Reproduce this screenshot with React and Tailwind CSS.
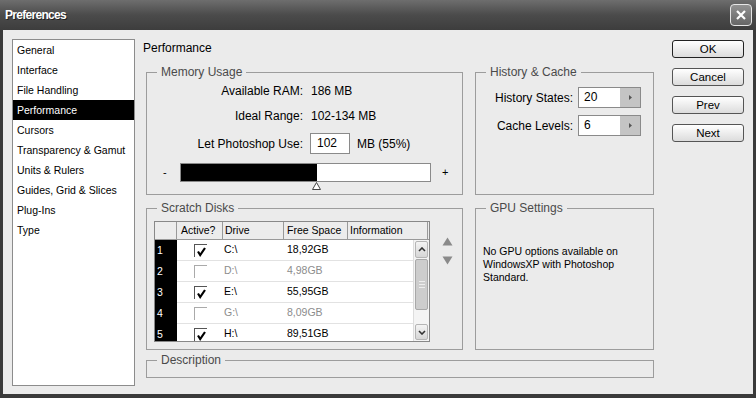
import React from 'react';

const categories = [
  'General',
  'Interface',
  'File Handling',
  'Performance',
  'Cursors',
  'Transparency & Gamut',
  'Units & Rulers',
  'Guides, Grid & Slices',
  'Plug-Ins',
  'Type',
];

const disks = [
  { n: 1, active: true, drive: 'C:\\', free: '18,92GB' },
  { n: 2, active: false, drive: 'D:\\', free: '4,98GB' },
  { n: 3, active: true, drive: 'E:\\', free: '55,95GB' },
  { n: 4, active: false, drive: 'G:\\', free: '8,09GB' },
  { n: 5, active: true, drive: 'H:\\', free: '89,51GB' },
];

const Group = ({ title, className, children }) => (
  <fieldset className={`border border-[#9c9c9c] min-w-0 ${className}`}>
    <legend className="ml-[10px] px-[4px] text-[12px] leading-[16px] text-[#4a4a4a]">{title}</legend>
    {children}
  </fieldset>
);

const Button = ({ label, primary }) => (
  <button
    className={`w-[72px] h-[18px] rounded-[3px] bg-gradient-to-b from-white to-[#dcdcdc] text-[11.5px] leading-[14px] text-black ${
      primary ? 'border-[1.5px] border-[#222]' : 'border border-[#555]'
    }`}
  >
    {label}
  </button>
);

const Spinner = ({ value }) => (
  <div className="flex w-[63px] h-[21px] border border-[#8a8a8a] bg-white">
    <div className="flex-1 pl-[5px] text-[12px] leading-[19px]">{value}</div>
    <div className="w-[20px] bg-[#c4c4c4] flex items-center justify-center">
      <svg width="5" height="7" viewBox="0 0 5 7">
        <path d="M1 1 L4 3.5 L1 6 Z" fill="#555" />
      </svg>
    </div>
  </div>
);

const Check = ({ on }) => (
  <div className={`relative w-[13px] h-[13px] border-l border-t ${on ? 'border-[#555]' : 'border-[#aaa]'}`}>
    {on && (
      <svg className="absolute left-[1px] top-[1px]" width="11" height="11" viewBox="0 0 11 11">
        <path d="M2 5.5 L4.2 9 L9 2" stroke="#000" strokeWidth="2.2" fill="none" />
      </svg>
    )}
  </div>
);

const Scrollbar = () => (
  <div className="w-[16px] flex flex-col bg-[#f4f4f4] border-l border-[#ddd]">
    <div className="h-[17px] mx-[1px] mt-[1px] rounded-[2px] border border-[#b5b5b5] bg-gradient-to-b from-[#f4f4f4] to-[#d6d6d6] flex items-center justify-center">
      <svg width="8" height="5" viewBox="0 0 8 5">
        <path d="M1 4 L4 1 L7 4" stroke="#333" strokeWidth="1.6" fill="none" />
      </svg>
    </div>
    <div className="h-[51px] mx-[1px] mt-[1px] rounded-[2px] border border-[#a8a8a8] bg-[#cdcdcd] flex flex-col items-center justify-center gap-[2px]">
      <div className="w-[6px] h-px bg-[#eee]" />
      <div className="w-[6px] h-px bg-[#eee]" />
      <div className="w-[6px] h-px bg-[#eee]" />
    </div>
    <div className="flex-1" />
    <div className="h-[16px] mx-[1px] mb-[1px] rounded-[2px] border border-[#b5b5b5] bg-gradient-to-b from-[#f4f4f4] to-[#d6d6d6] flex items-center justify-center">
      <svg width="8" height="5" viewBox="0 0 8 5">
        <path d="M1 1 L4 4 L7 1" stroke="#333" strokeWidth="1.6" fill="none" />
      </svg>
    </div>
  </div>
);

const App = () => {
  return (
    <div className="w-[756px] h-[398px] flex flex-col bg-[#3a3a3a] font-['Liberation_Sans',Arial,sans-serif] overflow-hidden">
      {/* title bar */}
      <div className="h-[30px] flex items-center justify-between pl-[5px] pr-[4px] bg-gradient-to-b from-[#6e6e6e] via-[#4b4b4b] to-[#3d3d3d]">
        <span className="text-white font-bold text-[12px] tracking-[-0.7px] font-['Liberation_Sans_Narrow','Liberation_Sans',sans-serif] [text-shadow:1px_1px_0_#222]">
          Preferences
        </span>
        <div className="w-[22px] h-[22px] rounded-[4px] border border-[#e6e6e6] bg-gradient-to-b from-[#929292] to-[#666] flex items-center justify-center">
          <svg width="12" height="12" viewBox="0 0 12 12">
            <path d="M2 2 L10 10 M10 2 L2 10" stroke="#fff" strokeWidth="2.2" />
          </svg>
        </div>
      </div>

      {/* dialog body */}
      <div className="flex-1 mx-[3px] mb-[4px] bg-[#ebebeb] flex pl-[9px] pt-[9px]">
        {/* category list */}
        <div className="w-[123px] h-[347px] border border-[#8c8c8c] bg-white">
          {categories.map((c) => (
            <div
              key={c}
              className={`h-[20px] px-[4px] text-[10.5px] leading-[20px] ${
                c === 'Performance' ? 'bg-black text-white' : 'text-black'
              }`}
            >
              {c}
            </div>
          ))}
        </div>

        {/* main panel */}
        <div className="ml-[8px] w-[511px] flex flex-col">
          <div className="h-[16px] text-[12px] leading-[16px] text-black mt-[1px]">Performance</div>

          <div className="ml-[3px] mt-[8px] grid grid-cols-[317px_179px] gap-x-[12px]">
            <Group title="Memory Usage" className="h-[131px]">
              <div className="flex items-center h-[20px] mt-[1px] text-[12px]">
                <span className="w-[156px] text-right">Available RAM:</span>
                <span className="ml-[8px]">186 MB</span>
              </div>
              <div className="flex items-center h-[20px] mt-[5px] text-[12px]">
                <span className="w-[156px] text-right">Ideal Range:</span>
                <span className="ml-[8px]">102-134 MB</span>
              </div>
              <div className="flex items-center h-[21px] mt-[7px] text-[12px]">
                <span className="w-[156px] text-right">Let Photoshop Use:</span>
                <div className="ml-[7px] w-[40px] h-[21px] border border-[#8a8a8a] bg-white pl-[6px] leading-[19px]">102</div>
                <span className="ml-[7px]">MB (55%)</span>
              </div>
              <div className="flex items-center mt-[9px]">
                <span className="w-[33px] pl-[16px] text-[11px]">-</span>
                <div className="relative flex w-[251px] h-[19px] border border-[#8a8a8a] bg-white">
                  <div className="w-[136px] bg-black" />
                  <svg className="absolute left-[131px] top-[18px]" width="9" height="8" viewBox="0 0 9 8">
                    <path d="M4.5 0.5 L8.5 7.5 L0.5 7.5 Z" fill="#fff" stroke="#444" />
                  </svg>
                </div>
                <span className="ml-[11px] text-[11px]">+</span>
              </div>
            </Group>

            <Group title="History & Cache" className="h-[131px]">
              <div className="flex items-center mt-[7px] text-[12px]">
                <span className="w-[97px] text-right">History States:</span>
                <div className="ml-[5px]"><Spinner value="20" /></div>
              </div>
              <div className="flex items-center mt-[7px] text-[12px]">
                <span className="w-[97px] text-right">Cache Levels:</span>
                <div className="ml-[5px]"><Spinner value="6" /></div>
              </div>
            </Group>

            <Group title="Scratch Disks" className="h-[150px] mt-[5px]">
              <div className="flex mt-[5px] ml-[7px]">
                <div className="w-[276px] h-[121px] border border-[#888] bg-white flex flex-col text-[10.5px]">
                  <div className="h-[18px] flex bg-[#ececec] border-b border-[#999] leading-[17px] text-black">
                    <div className="w-[22px] border-r border-[#999]" />
                    <div className="w-[46px] border-r border-[#999] pl-[4px]">Active?</div>
                    <div className="w-[61px] border-r border-[#999] pl-[2px]">Drive</div>
                    <div className="w-[64px] border-r border-[#999] pl-[3px]">Free Space</div>
                    <div className="w-[80px] border-r border-[#999] pl-[2px]">Information</div>
                  </div>
                  <div className="flex flex-1 min-h-0">
                    <div className="w-[258px] flex flex-col overflow-hidden">
                      {disks.map((d) => (
                        <div key={d.n} className="h-[21px] shrink-0 flex">
                          <div className="w-[22px] bg-black text-white pl-[2px] leading-[21px]">{d.n}</div>
                          <div className={`flex-1 flex items-center border-b border-[#e2e2e2] ${d.active ? 'text-black' : 'text-[#8c8c8c]'}`}>
                            <div className="w-[46px] pl-[17px] pt-[1px]"><Check on={d.active} /></div>
                            <div className="w-[61px] pl-[1px]">{d.drive}</div>
                            <div className="w-[64px] pl-[3px]">{d.free}</div>
                          </div>
                        </div>
                      ))}
                    </div>
                    <Scrollbar />
                  </div>
                </div>
                <div className="ml-[12px] mt-[16px] flex flex-col gap-[10px]">
                  <svg width="11" height="9" viewBox="0 0 11 9">
                    <path d="M5.5 0.5 L10.5 8.5 L0.5 8.5 Z" fill="#8a8a8a" />
                  </svg>
                  <svg width="11" height="9" viewBox="0 0 11 9">
                    <path d="M0.5 0.5 L10.5 0.5 L5.5 8.5 Z" fill="#8a8a8a" />
                  </svg>
                </div>
              </div>
            </Group>

            <Group title="GPU Settings" className="h-[150px] mt-[5px]">
              <div className="mt-[29px] pl-[7px] text-[10.5px] leading-[13px] text-black">
                No GPU options available on
                <br />
                WindowsXP with Photoshop
                <br />
                Standard.
              </div>
            </Group>
          </div>

          <Group title="Description" className="ml-[3px] mt-[2px] w-[508px] h-[26px]" />
        </div>

        {/* buttons */}
        <div className="ml-[18px] mt-[1px] flex flex-col gap-[10px]">
          <Button label="OK" primary />
          <Button label="Cancel" />
          <Button label="Prev" />
          <Button label="Next" />
        </div>
      </div>
    </div>
  );
};

export default App;
